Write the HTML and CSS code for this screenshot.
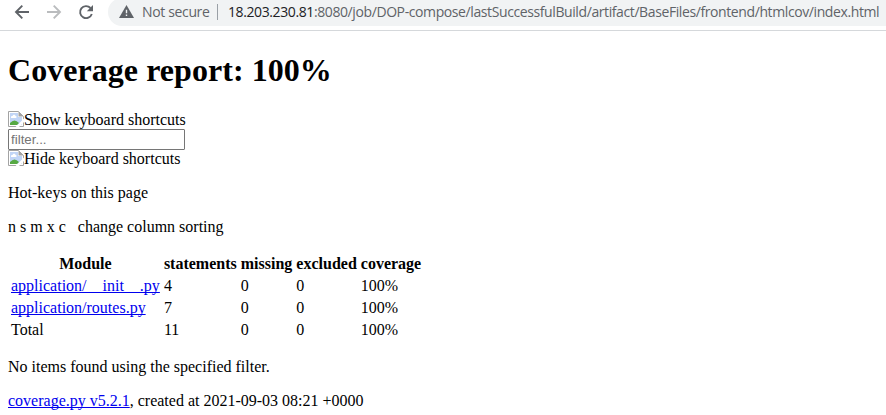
FILE: index.html
```html
<!DOCTYPE html>
<html lang="en">
<head>
<meta charset="utf-8">
<title>Coverage report</title>
<link rel="stylesheet" href="styles.css">
</head>
<body>
<div class="toolbar">
  <svg class="nav back" width="16" height="16" viewBox="0 0 16 16"><path d="M15 8H2.500M8.300 1.700L2 8l6.300 6.300" /></svg>
  <svg class="nav forward" width="16" height="16" viewBox="0 0 16 16"><path d="M1 8h12.500M7.700 1.700L14 8l-6.300 6.300" /></svg>
  <svg class="nav reload" width="16" height="16" viewBox="0 0 16 16"><path d="M12.500 4A6 6 0 1 0 13.800 10" /><path class="solid" d="M15 1v6.200H8.800z" /></svg>
  <div class="address">
    <svg class="warn" width="15" height="13" viewBox="0 0 15 13"><path d="M7.500 0L15 13H0z"/><path class="mark" d="M6.800 4.700h1.400v3.500H6.800zM6.800 9.500h1.400v1.400H6.800z"/></svg>
    <span class="insecure">Not secure</span>
    <span class="divider"></span>
    <span class="url"><b>18.203.230.81</b>:8080/job/DOP-compose/lastSuccessfulBuild/artifact/BaseFiles/frontend/htmlcov/index.html</span>
  </div>
</div>
<main>
  <h1>Coverage report: 100%</h1>
  <div class="missing"><svg class="broken" width="16" height="16" viewBox="0 0 16 16"><path fill="#fff" stroke="#a3a3a3" d="M.5.5h10l5 5v10H.5z"/><path fill="#c1d5f6" d="M2 2h8v4h4v8H2z"/><path fill="#56a943" d="M2 14v-2Q6.500 7 11 12l-2 2z"/><path fill="#fff" d="M3 7c-.5-2 1-2 1.500-2 .5-2 3-1.500 3 0 1.500 0 1.500 2 0 2zM16 7.500L7.500 16h3.500L16 11z"/><path fill="#a3a3a3" d="M10.500.5v5h5z"/></svg>Show keyboard shortcuts</div>
  <div class="filter"><input type="text" placeholder="filter..."></div>
  <div class="missing"><svg class="broken" width="16" height="16" viewBox="0 0 16 16"><path fill="#fff" stroke="#a3a3a3" d="M.5.5h10l5 5v10H.5z"/><path fill="#c1d5f6" d="M2 2h8v4h4v8H2z"/><path fill="#56a943" d="M2 14v-2Q6.500 7 11 12l-2 2z"/><path fill="#fff" d="M3 7c-.5-2 1-2 1.500-2 .5-2 3-1.500 3 0 1.500 0 1.500 2 0 2zM16 7.500L7.500 16h3.500L16 11z"/><path fill="#a3a3a3" d="M10.500.5v5h5z"/></svg>Hide keyboard shortcuts</div>
  <p>Hot-keys on this page</p>
  <p>n s m x c &nbsp; change column sorting</p>
  <table>
    <thead><tr><th>Module</th><th>statements</th><th>missing</th><th>excluded</th><th>coverage</th></tr></thead>
    <tbody>
      <tr><td><a href="#">application/__init__.py</a></td><td>4</td><td>0</td><td>0</td><td>100%</td></tr>
      <tr><td><a href="#">application/routes.py</a></td><td>7</td><td>0</td><td>0</td><td>100%</td></tr>
      <tr><td>Total</td><td>11</td><td>0</td><td>0</td><td>100%</td></tr>
    </tbody>
  </table>
  <p>No items found using the specified filter.</p>
  <p><a href="#">coverage.py v5.2.1</a>, created at 2021-09-03 08:21 +0000</p>
</main>
</body>
</html>
```

FILE: styles.css
```css
body {
  margin: 0;
  height: 415px;
  overflow: hidden;
  background: #fff;
  color: #000;
  font: 16px/18px "Liberation Serif", serif;
}
.toolbar {
  display: flex;
  align-items: center;
  box-sizing: border-box;
  height: 31px;
  padding-bottom: 6px;
  border-bottom: 1px solid #d5d8db;
}
.nav {
  flex: none;
  fill: none;
  stroke: #5f6368;
  stroke-width: 1.9;
}
.back { margin-left: 14px; }
.forward { margin-left: 16px; stroke: #babcbe; }
.reload { margin-left: 16px; }
.solid { fill: #5f6368; stroke: none; }
.address {
  display: flex;
  align-items: center;
  flex: 1;
  height: 28px;
  margin: -1px 0 0 14px;
  padding-left: 11px;
  border-radius: 14px 0 0 14px;
  background: #f1f3f4;
  font: 14px/20px "Open Sans", sans-serif;
  color: #5f6368;
  white-space: nowrap;
}
.warn { flex: none; fill: #5f6368; }
.mark { fill: #f1f3f4; }
.insecure { flex: none; margin-left: 8px; width: 67px; letter-spacing: -0.35px; }
.divider { flex: none; width: 1px; height: 16px; margin: 0 10px 0 8px; background: #9aa0a6; }
.url { letter-spacing: -0.4px; }
.url b { font-weight: 400; color: #202124; }
main { padding: 0 8px; }
h1 { margin: 21px 0 22px; font-size: 32px; line-height: 37px; letter-spacing: 0.05px; }
.missing { display: flex; height: 18px; line-height: 18px; }
.broken { flex: none; }
.filter { height: 21px; }
input {
  display: block;
  box-sizing: border-box;
  width: 177px;
  height: 21px;
  padding: 1px 2px;
  border: 1px solid #767676;
  border-radius: 1px;
  font: 13.333px "Liberation Sans", sans-serif;
}
p { margin: 16px 0; }
table { border-spacing: 2px; }
th, td { height: 18px; padding: 1px; }
td { text-align: left; }
a { color: #0000ee; text-decoration: underline; text-decoration-skip-ink: none; }
```
